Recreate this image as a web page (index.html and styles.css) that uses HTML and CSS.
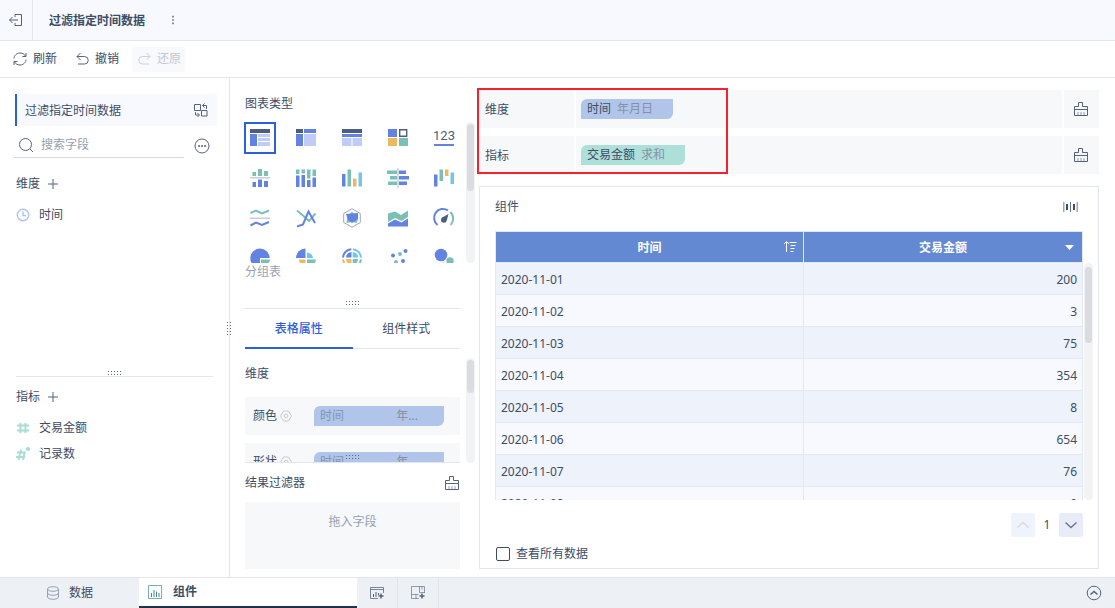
FILE: index.html
```html
<!DOCTYPE html>
<html lang="zh-CN">
<head>
<meta charset="utf-8">
<title>过滤指定时间数据</title>
<link rel="stylesheet" href="styles.css">
</head>
<body>
<svg class="defs" aria-hidden="true">
  <symbol id="brush" viewBox="0 0 16 16">
    <path d="M5.500 5.500V1.500h4v4h5v9h-13v-9zM1.500 8.500h13" /><path d="M5 11v3M8 11v3M11 11v3" opacity=".6" />
  </symbol>
  <symbol id="gear" viewBox="0 0 12 12">
    <path d="M3.500 1h5L11.500 6l-3 5h-5L.5 6z" /><circle cx="6" cy="6" r="1.800" />
  </symbol>
  <symbol id="plus" viewBox="0 0 12 12"><path d="M6 1v10M1 6h10" /></symbol>
</svg>

<header class="header">
  <button class="back" aria-label="返回">
    <svg class="i14 line" viewBox="0 0 14 14"><path d="M6 4V1.500h6.500v11H6V10M.5 7H9M3.500 4L.5 7l3 3" /></svg>
  </button>
  <h1 class="title">过滤指定时间数据</h1>
  <button class="more" aria-label="更多">
    <svg class="i14" viewBox="0 0 14 14"><path d="M6 2h2v2H6zM6 6h2v2H6zM6 10h2v2H6z" /></svg>
  </button>
</header>

<div class="toolbar">
  <button class="tool">
    <svg class="i16 line" viewBox="0 0 16 16"><path d="M2 7.500C2 4.500 4.800 2 8 2c2.500 0 4.500 1.200 5.500 3M14 2v3.500h-3.500M14 8.500c0 3-2.800 5.500-6 5.500-2.500 0-4.500-1.200-5.500-3M2 14v-3.500h3.500" /></svg>
    刷新
  </button>
  <button class="tool">
    <svg class="i16 line" viewBox="0 0 16 16"><path d="M6.500 2L3 5.500 6.500 9M3 5.500h7.500a3.700 3.700 0 0 1 0 7.500H4" /></svg>
    撤销
  </button>
  <button class="tool tool-off" disabled>
    <svg class="i16 line" viewBox="0 0 16 16"><path d="M10.500 2L14 5.500 10.500 9M14 5.500H6.500a3.700 3.700 0 0 0 0 7.500H13" /></svg>
    还原
  </button>
</div>

<main class="body">
  <aside class="fields">
    <section class="fields-top">
      <div class="dataset">
        <span>过滤指定时间数据</span>
        <button class="plain" aria-label="切换数据">
          <svg class="i14 line" viewBox="0 0 14 14"><path d="M.5 1.500h6v6h-6zM7.500 7.500h5.500v5.500H7.500zM8.500 2.500h4v3.500M10.500.5l-2 2 2 2M1.500 9v3H5M3.500 10l2 2-2 2" /></svg>
        </button>
      </div>
      <div class="search-row">
        <label class="search">
          <svg class="i16 line" viewBox="0 0 16 16"><circle cx="7.500" cy="7.500" r="6" /><path d="M12 12l3 3" /></svg>
          <input type="text" placeholder="搜索字段" aria-label="搜索字段">
        </label>
        <button class="plain" aria-label="更多选项">
          <svg class="i16 line" viewBox="0 0 16 16"><circle cx="8" cy="8" r="7" /><path d="M4 8h2M7 8h2M10 8h2" stroke-width="1.500" /></svg>
        </button>
      </div>
      <div class="group-head">维度 <button class="plain" aria-label="添加维度"><svg class="i12 line"><use href="#plus" /></svg></button></div>
      <ul class="field-list">
        <li>
          <svg class="i14 clock" viewBox="0 0 14 14"><circle cx="7" cy="7" r="5.700" /><path d="M7 3.500V7.500h3" /></svg>
          时间
        </li>
      </ul>
      <span class="grip grip-fields"></span>
    </section>
    <section class="fields-bottom">
      <div class="group-head">指标 <button class="plain" aria-label="添加指标"><svg class="i12 line"><use href="#plus" /></svg></button></div>
      <ul class="field-list">
        <li>
          <svg class="i14 hash" viewBox="0 0 14 14"><path d="M4.500 2v10M9.500 2v10M1 4.500h12M1 9.500h12" /></svg>
          交易金额
        </li>
        <li>
          <svg class="i14 hash" viewBox="0 0 14 14"><path d="M5 2.500L2.500 13M9 4.500L7 13M1 5.500h8M0 10h9M12 0v4M10.200 1l3.600 2M13.800 1l-3.600 2" /></svg>
          记录数
        </li>
      </ul>
    </section>
    <span class="grip grip-side"></span>
  </aside>

  <aside class="config">
    <section class="charts">
      <h2 class="label">图表类型</h2>
      <div class="scroller">
        <div class="chart-grid">
          <button class="chart chart-on" aria-label="分组表"><svg viewBox="0 0 20 20"><path class="k" d="M0 1h20v4H0z" /><path class="b" d="M0 6h7v12H0z" /><path class="l" d="M8 6h12v3H8zM8 10h12v3H8zM8 14h12v4H8z" /></svg></button>
          <button class="chart" aria-label="交叉表"><svg viewBox="0 0 20 20"><path class="k" d="M0 1h7v4H0z" /><path class="b" d="M8 1h12v4H8zM0 6h7v12H0z" /><path class="l" d="M8 6h12v12H8z" /></svg></button>
          <button class="chart" aria-label="明细表"><svg viewBox="0 0 20 20"><path class="k" d="M0 1h20v4H0z" /><path class="b" d="M0 6h20v3H0z" /><path class="l" d="M0 10h9.500v8H0zM10.500 10H20v8h-9.500z" /></svg></button>
          <button class="chart" aria-label="颜色表格"><svg viewBox="0 0 20 20"><path class="b" d="M0 1h9v8H0z" /><path d="M11.700 1.700h7v6.600h-7z" fill="none" stroke="#4d5d80" stroke-width="1.400" /><path class="y" d="M0 10h9v8H0z" /><path class="g" d="M11 10h9v8h-9z" /></svg></button>
          <button class="chart" aria-label="KPI指标卡"><svg viewBox="0 0 20 20"><text class="kpi" x="10" y="12" text-anchor="middle">123</text><path class="b" d="M0 16h20v2H0z" /></svg></button>

          <button class="chart" aria-label="对比柱状图"><svg viewBox="0 0 20 20"><path class="g" d="M2.500 4H6v4H2.500zM8 1h4v7H8zM14 3h4v5h-4z" /><path class="s" d="M0 9h20v1.500H0z" /><path class="b" d="M2.500 14H6v5H2.500zM8 11.500h4V19H8zM14 13h4v6h-4z" /></svg></button>
          <button class="chart" aria-label="堆积柱状图"><svg viewBox="0 0 20 20"><path class="g" d="M0 1.500h3.500V6H0zM5.500 1.500H9v4H5.500zM11 1.500h3.500v9H11zM16.500 1.500H20V8h-3.500z" /><path class="b" d="M0 7.500h3.500V19H0zM5.500 7H9v12H5.500zM11 12h3.500v7H11zM16.500 9.500H20V19h-3.500z" /></svg></button>
          <button class="chart" aria-label="分区柱状图"><svg viewBox="0 0 20 20"><path class="b" d="M0 6h3.500v12.500H0z" /><path class="g" d="M5.500 1.500H9v17H5.500z" /><path class="y" d="M11 10.500h3.500v8H11z" /><path class="c" d="M16.500 4.500H20v14h-3.500z" /></svg></button>
          <button class="chart" aria-label="对比条形图"><svg class="wide" viewBox="0 0 22 20"><path class="g" d="M0 2.500h10V6H0zM3 8h7v3.500H3zM1 13.500h9V17H1z" /><path class="s" d="M10.300 0h1.400v20h-1.400z" /><path class="b" d="M12 2.500h7V6h-7zM12 8h10v3.500H12zM12 13.500h8V17h-8z" /></svg></button>
          <button class="chart" aria-label="瀑布图"><svg viewBox="0 0 20 20"><path class="b" d="M0 6.500h3.500v12H0z" /><path class="g" d="M5.500 1.500H9V13H5.500z" /><path class="y" d="M11 1.500h3.500V8H11z" /><path class="c" d="M16.500 4.500H20V16h-3.500z" /></svg></button>

          <button class="chart" aria-label="折线图"><svg viewBox="0 0 20 20"><path class="gs" d="M.5 5L6 2.500 12 5.500l7-3" /><path class="s" d="M0 9.500h20v1.500H0z" /><path class="bs" d="M.5 17.500L6 14.500l6 2.500 7-3" /></svg></button>
          <button class="chart" aria-label="多系列折线图"><svg viewBox="0 0 20 20"><path class="gs" d="M1 2.500l6 5 6 5.500 6.500-7.500" /><path class="bs" d="M1 18.500l6-2 5.500-13L19 15" /></svg></button>
          <button class="chart" aria-label="雷达图"><svg viewBox="0 0 20 20"><path d="M10 .8l8.300 4.700v9L10 19.200l-8.300-4.700v-9z" fill="none" stroke="#9aa5bb" /><path class="g" d="M10 3.500l6 6-1 5.500-5-1-5.500 1L5.500 8z" /><path class="b" d="M4 6l12-1v6l-6 4-4-3z" /></svg></button>
          <button class="chart" aria-label="面积图"><svg viewBox="0 0 20 20"><path class="g" d="M0 5.500L7 3.500 13 7l7-4.500V9l-6.500 4L7 10l-7 4z" /><path class="b" d="M0 15.500l7-4 6.500 3 6.500-4v8H0z" /></svg></button>
          <button class="chart" aria-label="仪表盘"><svg viewBox="0 0 20 20"><path class="bs" d="M3.500 17A9 9 0 0 1 14 2.400" /><path class="gs" d="M16.300 4A9 9 0 0 1 16.500 17" /><path class="k" d="M14.500 6l-1.700 6.500A3 3 0 1 1 9.500 8.700z" /></svg></button>

          <button class="chart" aria-label="饼图"><svg viewBox="0 0 20 20"><path class="b" d="M10 20A9.700 9.700 0 1 1 19.700 10H10z" /><path class="g" d="M11 11.500h9a9 9 0 0 1-9 8z" /></svg></button>
          <button class="chart" aria-label="玫瑰图"><svg viewBox="0 0 20 20"><path class="b" d="M0 10A9.500 9.500 0 0 1 9.500.5V10z" /><path class="c" d="M11 4.500a6 6 0 0 1 6 5.500h-6z" /><path class="y" d="M3 11.500h6.500V18A6.500 6.500 0 0 1 3 11.500z" /><path class="g" d="M11 11.500h9a9 9 0 0 1-9 8z" /></svg></button>
          <button class="chart" aria-label="多层饼图"><svg viewBox="0 0 20 20"><path class="bs" d="M1 9.500A9 9 0 0 1 9.300 1.200" /><path class="cs" d="M11 1.200A9 9 0 0 1 19 9.500" /><path class="ys" d="M1 11.500A9 9 0 0 0 9.300 19" /><path class="gs" d="M19 11.500A9 9 0 0 1 11 19" /><path class="b" d="M4 9.500a6 6 0 0 1 5.500-5.500v5.500z" /><path class="c" d="M10.700 4a6 6 0 0 1 5.500 5.500h-5.500z" /><path class="y" d="M4 11h5.500v5.500A6 6 0 0 1 4 11z" /><path class="g" d="M10.700 11h5.500a6 6 0 0 1-5.500 5.500z" /></svg></button>
          <button class="chart" aria-label="散点图"><svg viewBox="0 0 20 20"><g class="b"><circle cx="5" cy="7.500" r="2" /><circle cx="17.500" cy="3" r="2" /><circle cx="15" cy="13" r="2" /></g><g class="g"><circle cx="12" cy="6" r="2" /><circle cx="8" cy="14" r="2" /></g></svg></button>
          <button class="chart" aria-label="气泡图"><svg viewBox="0 0 20 20"><circle class="b" cx="7" cy="7" r="6.300" /><circle class="g" cx="16" cy="13" r="3.700" /><circle class="y" cx="9" cy="17" r="2.500" /></svg></button>
        </div>
        <div class="track"><div class="thumb thumb-half"></div></div>
      </div>
      <p class="chart-name">分组表</p>
      <span class="grip grip-charts"></span>
    </section>

    <div class="tabs" role="tablist">
      <button class="tab tab-on" role="tab" aria-selected="true">表格属性</button>
      <button class="tab" role="tab" aria-selected="false">组件样式</button>
    </div>

    <section class="props">
      <div class="props-list">
        <h2 class="props-title">维度</h2>
        <div class="prop">
          颜色 <svg class="i12 gear"><use href="#gear" /></svg>
          <span class="pill pill-dim"><span>时间</span><span>年...</span></span>
        </div>
        <div class="prop">
          形状 <svg class="i12 gear"><use href="#gear" /></svg>
          <span class="pill pill-dim"><span>时间</span><span>年...</span></span>
        </div>
      </div>
      <div class="track"><div class="thumb thumb-third"></div></div>
      <span class="grip grip-props"></span>
    </section>

    <section class="filter">
      <div class="filter-head">
        <h2>结果过滤器</h2>
        <button class="plain" aria-label="清空过滤器"><svg class="i16 line"><use href="#brush" /></svg></button>
      </div>
      <div class="drop">拖入字段</div>
    </section>
  </aside>

  <section class="stage">
    <div class="shelves">
      <div class="shelf">
        <span class="shelf-name">维度</span>
        <div class="shelf-items"><span class="pill pill-blue">时间 <em>年月日</em></span></div>
        <button class="shelf-clear" aria-label="清空维度"><svg class="i16 line"><use href="#brush" /></svg></button>
      </div>
      <div class="shelf">
        <span class="shelf-name">指标</span>
        <div class="shelf-items"><span class="pill pill-green">交易金额 <em>求和</em></span></div>
        <button class="shelf-clear" aria-label="清空指标"><svg class="i16 line"><use href="#brush" /></svg></button>
      </div>
      <span class="highlight"></span>
    </div>

    <article class="card">
      <div class="card-head">
        <h2>组件</h2>
        <button class="plain" aria-label="列宽">
          <svg class="i16" viewBox="0 0 16 16"><path d="M1 3h1.500v10H1zM14.500 3H16v10h-1.500z" opacity=".5" /><path d="M4 5h2v6H4zM11 5h2v6h-2z" /><path d="M8 3h1v10H8z" opacity=".8" /></svg>
        </button>
      </div>
      <div class="table-area">
        <table class="table">
          <colgroup><col class="col-time"><col class="col-amount"></colgroup>
          <thead>
            <tr>
              <th>时间
                <svg class="i14 th-icon" viewBox="0 0 14 14"><path d="M3.500 12V2M1 4l2.500-2.500L6 4M6.500 2.500H13.500M7.500 5.500H12.500M7.500 8.500h4M7.500 11.500h3" fill="none" stroke="#fff" /></svg>
              </th>
              <th>交易金额
                <svg class="i14 th-icon" viewBox="0 0 14 14"><path d="M3 5h9L7.500 10z" fill="#fff" /></svg>
              </th>
            </tr>
          </thead>
          <tbody>
            <tr><td>2020-11-01</td><td>200</td></tr>
            <tr><td>2020-11-02</td><td>3</td></tr>
            <tr><td>2020-11-03</td><td>75</td></tr>
            <tr><td>2020-11-04</td><td>354</td></tr>
            <tr><td>2020-11-05</td><td>8</td></tr>
            <tr><td>2020-11-06</td><td>654</td></tr>
            <tr><td>2020-11-07</td><td>76</td></tr>
            <tr><td>2020-11-08</td><td>9</td></tr>
          </tbody>
        </table>
        <div class="track track-table"><div class="thumb thumb-third"></div></div>
      </div>
      <div class="pager">
        <button class="page page-off" aria-label="上一页" disabled><svg class="i14" viewBox="0 0 14 14"><path d="M1.500 9.500L7 4.500l5.500 5" /></svg></button>
        <span>1</span>
        <button class="page" aria-label="下一页"><svg class="i14" viewBox="0 0 14 14"><path d="M1.500 4.500L7 9.500l5.500-5" /></svg></button>
      </div>
      <label class="all"><input type="checkbox">查看所有数据</label>
    </article>
  </section>
</main>

<footer class="footer">
  <button class="sheet">
    <svg class="i14 sheet-db" viewBox="0 0 14 14"><ellipse cx="7" cy="3" rx="5.500" ry="2.300" /><path d="M1.500 3v8c0 1.300 2.500 2.300 5.500 2.300s5.500-1 5.500-2.300V3M1.500 7c0 1.300 2.500 2.300 5.500 2.300s5.500-1 5.500-2.300" /></svg>
    数据
  </button>
  <button class="sheet sheet-on">
    <svg class="i14 sheet-chart" viewBox="0 0 14 14"><path d="M.5.5h13v13H.5z" opacity=".7" /><path d="M3.500 12V8M6 12V5M8.500 12V6.500M11 12V8" /></svg>
    组件
  </button>
  <button class="add" aria-label="添加组件">
    <svg class="i14 line" viewBox="0 0 14 14"><path d="M8 12.500H.5v-11h13V7M.5 3.500h13" opacity=".75" /><path d="M3.500 11V8M6 11V6M8.500 9V7" /><path d="M11 7.500v5M8.500 10h5" stroke-width="1.500" /></svg>
  </button>
  <button class="add" aria-label="添加仪表板">
    <svg class="i14 line" viewBox="0 0 14 14"><path d="M8 12.500H.5v-12h13V7M8.500.5v6h5M.5 8.500h7M5 8.500v4M11 .5v3" opacity=".6" /><path d="M11 7.500v5M8.500 10h5" stroke-width="1.500" /></svg>
  </button>
  <button class="plain collapse" aria-label="展开">
    <svg class="i16 line" viewBox="0 0 16 16"><circle cx="8" cy="8" r="6.800" /><path d="M4.500 9.500L8 6.500l3.500 3" stroke-width="1.500" /></svg>
  </button>
</footer>
</body>
</html>
```
FILE: styles.css
```css
* { box-sizing: border-box; }

body {
  margin: 0;
  height: 100vh;
  display: flex;
  flex-direction: column;
  overflow: hidden;
  background: #fff;
  color: #3d4d66;
  font: 12px/18px "Noto Sans", "Noto Sans CJK SC", sans-serif;
}

button, input { font: inherit; color: inherit; }
button { margin: 0; padding: 0; border: 0; background: none; }
h1, h2, p, ul { margin: 0; padding: 0; font-size: 12px; font-weight: 400; list-style: none; }
svg { display: block; flex: none; fill: currentColor; }

.defs { position: absolute; width: 0; height: 0; }
.i12 { width: 12px; height: 12px; }
.i14 { width: 14px; height: 14px; }
.i16 { width: 16px; height: 16px; }
.line { fill: none; stroke: #55637c; stroke-width: 1; }
.plain { display: flex; }

/* Header and toolbar */
.header {
  flex: none;
  display: flex;
  align-items: center;
  height: 41px;
  background: #f7f9fe;
  border-bottom: 1px solid #e3e5f0;
}
.back {
  display: flex;
  align-items: center;
  justify-content: center;
  align-self: stretch;
  width: 33px;
  border-right: 1px solid #e3e5f0;
}
.title { margin-left: 16px; padding-top: 2px; font-weight: 700; }
.more { margin-left: 22px; color: #6c788e; }
.more svg { width: 12px; height: 12px; }

.toolbar {
  flex: none;
  display: flex;
  align-items: center;
  gap: 9px;
  height: 37px;
  padding-left: 8px;
  border-bottom: 1px solid #e3e5ec;
}
.tool { display: flex; align-items: center; gap: 5px; height: 25px; padding: 0 4px; }
.tool-off { background: #f7f9fc; border-radius: 2px; color: #c3c8d1; }
.tool-off .line { stroke: #cdd1d9; }

.body { flex: 1; min-height: 0; display: flex; }

/* Drag grips */
.grip {
  position: absolute;
  width: 13px;
  height: 5px;
  background: conic-gradient(from 270deg at 1px 1px, #5c6980 90deg, transparent 0) 0 0 / 3px 3px;
}
.grip-fields { left: 50%; bottom: 1px; margin-left: -6px; }
.grip-charts { left: 50%; bottom: 2px; margin-left: -6px; }
.grip-props { left: 101px; bottom: 3px; }
.grip-side { right: -3px; top: 50%; width: 5px; height: 13px; margin-top: -6px; }

/* Field list */
.fields {
  position: relative;
  flex: none;
  display: flex;
  flex-direction: column;
  width: 230px;
  padding: 0 16px 0 14px;
  border-right: 1px solid #e3e5f0;
}
.fields-top { position: relative; flex: 3 1 0; }
.fields-top::after {
  content: "";
  position: absolute;
  left: 2px;
  right: 0;
  bottom: 0;
  height: 1px;
  background: #e3e5f0;
}
.dataset {
  display: flex;
  align-items: center;
  justify-content: space-between;
  height: 32px;
  margin: 16px -4px 0 1px;
  padding: 0 9px 0 8px;
  background: #f7f9fe;
  border-left: 2px solid #2c60db;
}
.dataset span { padding-top: 2px; }
.search-row { display: flex; align-items: center; justify-content: space-between; padding-right: 3px; }
.search {
  display: flex;
  align-items: center;
  gap: 7px;
  width: 170px;
  height: 32px;
  padding: 6px 4px 0;
  border-bottom: 1px solid #d6d9e0;
}
.search-row > .plain { padding-top: 8px; }
.search input { min-width: 0; flex: 1; padding: 0; border: 0; outline: 0; background: none; }
.search input::placeholder { color: #96a0b0; opacity: 1; }
.group-head { display: flex; align-items: center; gap: 7px; margin: 17px 0 0 2px; }
.fields-bottom { flex: 2 1 0; }
.fields-bottom .group-head { margin-top: 11px; }
.field-list { margin: 9px 0 0 2px; }
.field-list li { display: flex; align-items: center; gap: 9px; height: 26px; }
.clock { fill: none; stroke: #adc4ec; stroke-width: 1.4; }
.hash { fill: none; stroke: #a9ddd6; stroke-width: 2; }

/* Chart configuration */
.config {
  flex: none;
  display: flex;
  flex-direction: column;
  width: 249px;
  padding-left: 14px;
}
.charts { position: relative; margin-right: 19px; padding: 17px 0 27px; border-bottom: 1px solid #e3e5ec; }
.charts .scroller { margin-right: -15px; }
.label { padding-left: 1px; }
.scroller { display: flex; gap: 6px; height: 141px; margin-top: 9px; }
.chart-grid {
  flex: 1;
  display: grid;
  grid-template-columns: repeat(5, 32px);
  grid-auto-rows: 32px;
  justify-content: space-between;
  gap: 8px 0;
  overflow: hidden;
}
.chart { display: flex; align-items: center; justify-content: center; }
.chart svg { width: 20px; height: 20px; overflow: visible; }
.chart .wide { width: 22px; }
.chart-on { border: 2px solid #2c60db; }
.k { fill: #4d5d80; }
.b { fill: #6283e2; }
.l { fill: #bfccf5; }
.g { fill: #7cbfb7; }
.y { fill: #efb75f; }
.c { fill: #73c4ee; }
.s { fill: #c9ccd9; }
.bs, .gs, .ys, .cs { fill: none; stroke-width: 2; }
.bs { stroke: #6283e2; }
.gs { stroke: #7cbfb7; }
.ys { stroke: #efb75f; }
.cs { stroke: #73c4ee; }
.kpi { font: 13px Roboto, sans-serif; fill: #4d5d80; }
.chart-name { padding-left: 1px; color: #9aa3b1; }

.track { flex: none; width: 9px; padding: 2px 1px; border-radius: 5px; background: #f2f3f5; }
.thumb { border-radius: 4px; background: #dadce2; }
.thumb-half { height: 49%; }
.thumb-third { height: 33%; }

.tabs { flex: none; display: flex; height: 40px; margin: 0 19px 0 1px; }
.tab { flex: 1; padding-top: 1px; border-bottom: 1px solid #e3e5f0; }
.tab-on { color: #2c60db; border-bottom: 2px solid #2c60db; font-weight: 500; }

.props {
  position: relative;
  flex: 1;
  min-height: 0;
  display: flex;
  gap: 6px;
  margin: 0 4px 0 1px;
}
.props .track { margin-top: 9px; }
.props-list { flex: 1; overflow: hidden; border-bottom: 1px solid #e3e5f0; }
.props-title { margin: 16px 0 14px; }
.prop {
  display: flex;
  align-items: center;
  gap: 3px;
  height: 38px;
  margin-bottom: 8px;
  padding: 0 16px 0 8px;
  background: #f6f8fa;
}
.gear { fill: none; stroke: #c8ccd5; }
.pill {
  display: flex;
  align-items: center;
  height: 20px;
  padding: 0 6px;
  border-radius: 6px 0;
}
.pill-dim {
  justify-content: space-between;
  width: 130px;
  margin-left: auto;
  padding-right: 26px;
  background: #b0c5e9;
  color: #8494b4;
}
.pill-dim span:last-child { color: #888fa3; }

.filter { flex: none; margin: 0 19px 8px 1px; }
.filter-head { display: flex; align-items: center; justify-content: space-between; height: 39px; }
.drop { height: 67px; padding-top: 11px; background: #f6f8fa; color: #96a0b0; text-align: center; }

/* Stage */
.stage {
  flex: 1;
  min-width: 0;
  display: flex;
  flex-direction: column;
  gap: 12px;
  padding: 12px 16px 8px 0;
}
.shelves { position: relative; display: flex; flex-direction: column; gap: 8px; }
.shelf { display: flex; gap: 2px; height: 38px; }
.shelf-name, .shelf-items, .shelf-clear { display: flex; align-items: center; background: #f6f8fa; }
.shelf-name { width: 95px; padding: 2px 0 0 6px; }
.shelf-items { flex: 1; padding-left: 5px; }
.shelf-clear { justify-content: center; width: 35px; padding-right: 1px; }
.pill em { margin: 0 20px 0 6px; font-style: normal; color: #8791a5; }
.pill-blue { padding-right: 0; background: #b0c5e9; }
.pill-green { padding-right: 0; background: #aee0da; }
.highlight {
  position: absolute;
  left: -2px;
  top: -2px;
  width: 251px;
  height: 86px;
  border: 2px solid #f5222d;
  pointer-events: none;
}

.card {
  flex: 1;
  min-height: 0;
  display: flex;
  flex-direction: column;
  padding: 11px 5px 5px 15px;
  border: 1px solid #e3e5f0;
}
.card-head { display: flex; align-items: center; justify-content: space-between; padding-right: 15px; }
.table-area { flex: 1; min-height: 0; display: flex; gap: 1px; margin-top: 15px; overflow: hidden; }
.table { flex: 1; align-self: flex-start; border-collapse: collapse; table-layout: fixed; }
.col-time { width: 52.5%; }
.col-amount { width: 47.5%; }
.table th, .table td { border: 1px solid #e2e9f5; }
.table th { position: relative; height: 31px; padding: 2px 0 0; background: #6489d3; color: #fff; font-weight: 700; }
.th-icon { position: absolute; right: 6px; top: 8px; }
.table td { height: 32px; padding: 2px 5px 0; background: #f7f9fe; }
.table tr:nth-child(odd) td { background: #edf2fb; }
.table td:last-child { text-align: right; }
.track-table { margin-top: 32px; padding-top: 4px; background: #f3f3f4; }

.pager { display: flex; align-items: center; justify-content: flex-end; gap: 8px; margin: 13px 10px 0 0; }
.pager span { width: 8px; text-align: center; }
.page { display: flex; align-items: center; justify-content: center; width: 24px; height: 24px; border-radius: 2px; background: #e8ecf8; }
.page svg { fill: none; stroke: #6b7896; stroke-width: 1.5; }
.page-off { background: #eff3fc; }
.page-off svg { stroke: #d5d9e2; }
.all { display: flex; align-items: center; gap: 6px; margin: 8px 0 0 1px; }
.all input { appearance: none; width: 14px; height: 14px; margin: 0; border: 1px solid #3d4d66; border-radius: 2px; background: #fff; }

/* Sheet tabs */
.footer { flex: none; display: flex; height: 31px; background: #edf0f5; border-top: 1px solid #e3e5f0; }
.sheet { display: flex; align-items: center; gap: 9px; width: 139px; padding-left: 46px; }
.sheet-on { gap: 11px; width: 218px; padding-left: 9px; background: #fff; border-bottom: 2px solid #22304f; font-weight: 700; }
.sheet-db { fill: none; stroke: #98a2b3; }
.sheet-chart { fill: none; stroke: #3f8f86; }
.add { display: flex; align-items: center; justify-content: center; width: 41px; border-right: 1px solid #e3e5ec; }
.collapse { align-items: center; margin: 0 13px 0 auto; }
```
